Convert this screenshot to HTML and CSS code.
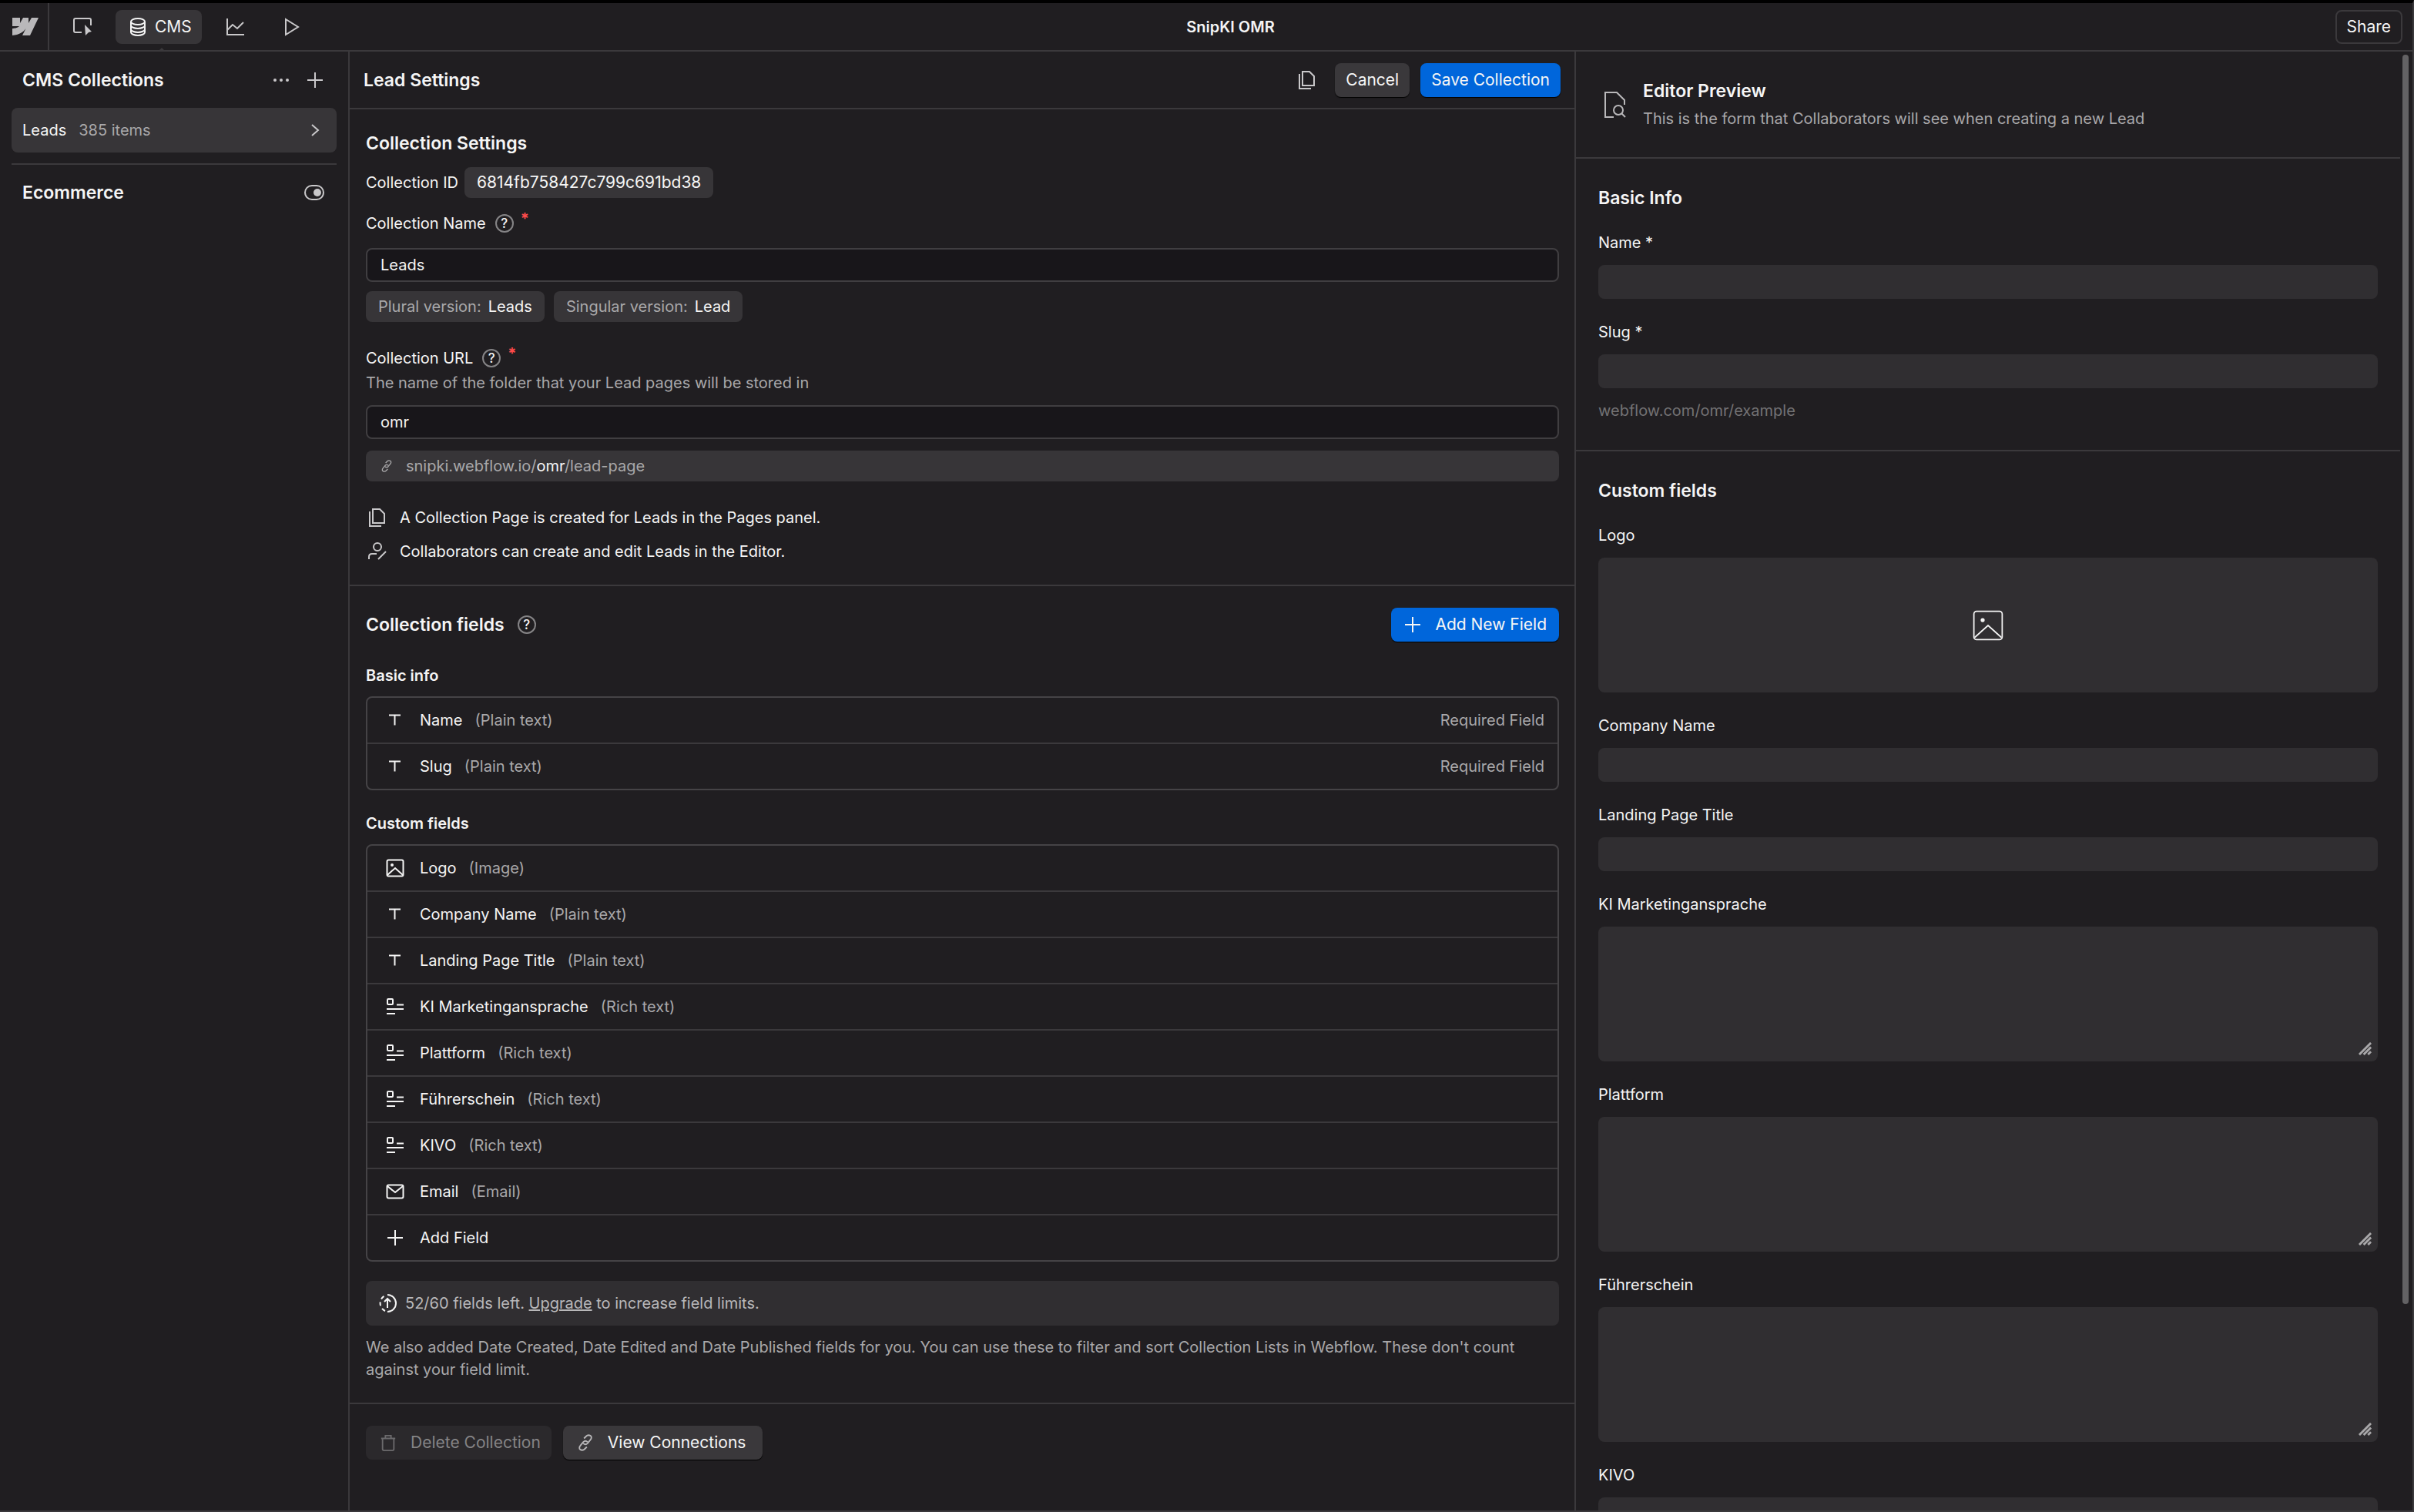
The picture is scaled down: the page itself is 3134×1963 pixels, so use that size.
FILE: index.html
```html
<!DOCTYPE html>
<html lang="en">
<head>
  <meta charset="UTF-8" />
  <meta name="viewport" content="width=device-width, initial-scale=1.0" />
  <title>SnipKI OMR</title>
  <link rel="stylesheet" href="styles.css">
</head>
<body>
  <!-- shared icons -->
  <svg class="sprite" aria-hidden="true">
    <symbol id="i-text" viewBox="0 0 24 24"><path d="M4 5.5h15M11.500 5.500v13" /></symbol>
    <symbol id="i-image" viewBox="0 0 24 24"><rect x="1.5" y="1.5" width="21" height="21" rx="2" /><circle cx="8" cy="8" r="1" fill="currentColor" /><path d="M2 21l10-9 10 9" /></symbol>
    <symbol id="i-rich" viewBox="0 0 24 24"><rect x="2" y="2" width="7" height="7" rx="1" /><path d="M14 9.5h9M1 15h22M1 21h11" /></symbol>
    <symbol id="i-mail" viewBox="0 0 24 24"><rect x="1.5" y="3.5" width="21" height="17" rx="2" /><path d="M2 5l10 8 10-8" /></symbol>
    <symbol id="i-plus" viewBox="0 0 24 24"><path d="M12 2v20M2 12h20" /></symbol>
    <symbol id="i-pages" viewBox="0 0 24 24"><path d="M6 1h9l6 6v12H6zM2 4v19h15" /></symbol>
    <symbol id="i-link" viewBox="0 0 24 24"><path d="M10 6l3-3c2-2 4-2 6-1s2 4 0 6l-4 5c-2 2-4 2-6 0M14 18l-3 3c-2 2-4 2-6 1s-2-4 0-6l4-5c2-2 4-2 6 0" /></symbol>
    <symbol id="i-grip" viewBox="0 0 18 18"><path d="M1 17L17 1M7 17L17 7M13 17l4-4" /></symbol>
  </svg>

  <header class="topbar">
    <a class="logo" href="#" aria-label="Webflow">
      <svg viewBox="0 0 34 23"><path fill="currentColor" d="M34 0L23 23H13l4.500-9C14 19 9 22 0 23v-9s6 0 9-3H0V0h10v7l4-7h7v7l4-7z" /></svg>
    </a>
    <div class="topbar-main">
      <nav class="tools">
        <button class="tool" aria-label="Designer"><svg class="icon" viewBox="0 0 24 24"><path d="M11 19H3a2 2 0 0 1-2-2V3a2 2 0 0 1 2-2h18a2 2 0 0 1 2 2v7" /><path fill="currentColor" stroke="none" d="M15 9l9 9-4 1-4 4z" /></svg></button>
        <button class="tool tool-active"><svg class="icon" viewBox="0 0 24 24"><ellipse cx="12" cy="5" rx="9" ry="4" /><path d="M3 5v14c0 2 4 4 9 4s9-2 9-4V5M3 10c0 2 4 4 9 4s9-2 9-4M3 15c0 2 4 4 9 4s9-2 9-4" /></svg>CMS</button>
        <button class="tool" aria-label="Insights"><svg class="icon" viewBox="0 0 24 24"><path d="M2 1v21h22M2 16l7-7 6 5 8-8" /></svg></button>
        <button class="tool" aria-label="Preview"><svg class="icon" viewBox="0 0 24 24"><path d="M4 2l16 10L4 22z" /></svg></button>
      </nav>
      <div class="site-name">SnipKI OMR</div>
      <button class="share">Share</button>
    </div>
  </header>

  <div class="workspace">
    <aside class="sidebar">
      <div class="side-head">
        <h2>CMS Collections</h2>
        <button class="icon-btn" aria-label="More"><svg class="icon" viewBox="0 0 24 24"><g fill="currentColor" stroke="none"><circle cx="4" cy="12" r="2" /><circle cx="12" cy="12" r="2" /><circle cx="20" cy="12" r="2" /></g></svg></button>
        <button class="icon-btn" aria-label="Add collection"><svg class="icon"><use href="#i-plus" /></svg></button>
      </div>
      <a class="collection" href="#">Leads <span class="muted">385 items</span><svg class="icon" viewBox="0 0 24 24"><path d="M8 5l8 7-8 7" /></svg></a>
      <div class="side-head side-shop">
        <h2>Ecommerce</h2>
        <button class="icon-btn" aria-label="Enable Ecommerce"><svg class="icon toggle" viewBox="0 0 26 20"><rect x="1" y="1" width="24" height="18" rx="9" /><circle cx="17" cy="10" r="5" fill="currentColor" stroke="none" /></svg></button>
      </div>
    </aside>

    <main class="settings">
      <div class="settings-head">
        <h2>Lead Settings</h2>
        <button class="icon-btn" aria-label="Duplicate"><svg class="icon"><use href="#i-pages" /></svg></button>
        <button class="btn">Cancel</button>
        <button class="btn btn-primary">Save Collection</button>
      </div>

      <section class="section general">
        <h2>Collection Settings</h2>
        <div class="id-row">Collection ID <span class="chip">6814fb758427c799c691bd38</span></div>
        <div class="label-row">
          <label for="name">Collection Name</label><span class="help">?</span><span class="star">*</span>
        </div>
        <input class="input name-input" id="name" type="text" value="Leads">
        <div class="chips">
          <span class="chip"><span class="muted">Plural version:</span> Leads</span>
          <span class="chip"><span class="muted">Singular version:</span> Lead</span>
        </div>
        <div class="label-row">
          <label for="url">Collection URL</label><span class="help">?</span><span class="star">*</span>
        </div>
        <p class="hint">The name of the folder that your Lead pages will be stored in</p>
        <input class="input" id="url" type="text" value="omr">
        <div class="url"><svg class="icon"><use href="#i-link" /></svg><span>snipki.webflow.io/<b>omr</b>/lead-page</span></div>
        <ul class="facts">
          <li><svg class="icon"><use href="#i-pages" /></svg>A Collection Page is created for Leads in the Pages panel.</li>
          <li><svg class="icon" viewBox="0 0 24 24"><circle cx="12" cy="6" r="5" /><path d="M1 22v-3c0-3 2-4 4-4h6M13 22l10-10" /></svg>Collaborators can create and edit Leads in the Editor.</li>
        </ul>
      </section>

      <section class="section">
        <div class="fields-head">
          <h2>Collection fields</h2><span class="help">?</span>
          <button class="btn btn-primary btn-add"><svg class="icon"><use href="#i-plus" /></svg>Add New Field</button>
        </div>
        <h3>Basic info</h3>
        <ul class="fields">
          <li><svg class="icon"><use href="#i-text" /></svg>Name <span class="muted">(Plain text)</span><span class="required">Required Field</span></li>
          <li><svg class="icon"><use href="#i-text" /></svg>Slug <span class="muted">(Plain text)</span><span class="required">Required Field</span></li>
        </ul>
        <h3>Custom fields</h3>
        <ul class="fields">
          <li><svg class="icon"><use href="#i-image" /></svg>Logo <span class="muted">(Image)</span></li>
          <li><svg class="icon"><use href="#i-text" /></svg>Company Name <span class="muted">(Plain text)</span></li>
          <li><svg class="icon"><use href="#i-text" /></svg>Landing Page Title <span class="muted">(Plain text)</span></li>
          <li><svg class="icon"><use href="#i-rich" /></svg>KI Marketingansprache <span class="muted">(Rich text)</span></li>
          <li><svg class="icon"><use href="#i-rich" /></svg>Plattform <span class="muted">(Rich text)</span></li>
          <li><svg class="icon"><use href="#i-rich" /></svg>Führerschein <span class="muted">(Rich text)</span></li>
          <li><svg class="icon"><use href="#i-rich" /></svg>KIVO <span class="muted">(Rich text)</span></li>
          <li><svg class="icon"><use href="#i-mail" /></svg>Email <span class="muted">(Email)</span></li>
          <li><button class="add-field"><svg class="icon"><use href="#i-plus" /></svg>Add Field</button></li>
        </ul>
        <div class="limit">
          <svg class="icon" viewBox="0 0 24 24"><path d="M12 1a11 11 0 0 1 0 22M12 18V7M8 10l4-4 4 4" /><path stroke-dasharray="5 4" d="M9 22A11 11 0 0 1 9 2" /></svg>
          <span>52/60 fields left. <a href="#">Upgrade</a> to increase field limits.</span>
        </div>
        <p class="note">We also added Date Created, Date Edited and Date Published fields for you. You can use these to filter and sort Collection Lists in Webflow. These don't count against your field limit.</p>
      </section>

      <section class="section actions">
        <button class="btn btn-icon" disabled><svg class="icon" viewBox="0 0 24 24"><path d="M2 6h20M8 6V2h8v4M4 6v15a2 2 0 0 0 2 2h12a2 2 0 0 0 2-2V6" /></svg>Delete Collection</button>
        <button class="btn btn-icon"><svg class="icon"><use href="#i-link" /></svg>View Connections</button>
      </section>
    </main>

    <aside class="preview">
      <div class="preview-body">
        <div class="preview-head">
          <svg class="icon" viewBox="0 0 28 34"><path d="M12 33H1V1h15l10 10v6" /><circle cx="18" cy="24" r="6" /><path d="M22 28l5 5" /></svg>
          <div>
            <h2>Editor Preview</h2>
            <p class="muted">This is the form that Collaborators will see when creating a new Lead</p>
          </div>
        </div>
        <section class="form form-basic">
          <h2>Basic Info</h2>
          <div class="field"><label for="p-name">Name *</label><input class="box" id="p-name" type="text"></div>
          <div class="field"><label for="p-slug">Slug *</label><input class="box" id="p-slug" type="text"></div>
          <p class="slug">webflow.com/omr/example</p>
        </section>
        <section class="form">
          <h2>Custom fields</h2>
          <div class="field"><label for="p-logo">Logo</label><button class="box area upload" id="p-logo"><svg class="icon"><use href="#i-image" /></svg></button></div>
          <div class="field"><label for="p-company">Company Name</label><input class="box" id="p-company" type="text"></div>
          <div class="field"><label for="p-title">Landing Page Title</label><input class="box" id="p-title" type="text"></div>
          <div class="field"><label for="p-ki">KI Marketingansprache</label><textarea class="box area" id="p-ki"></textarea><svg class="grip"><use href="#i-grip" /></svg></div>
          <div class="field"><label for="p-plattform">Plattform</label><textarea class="box area" id="p-plattform"></textarea><svg class="grip"><use href="#i-grip" /></svg></div>
          <div class="field"><label for="p-schein">Führerschein</label><textarea class="box area" id="p-schein"></textarea><svg class="grip"><use href="#i-grip" /></svg></div>
          <div class="field"><label for="p-kivo">KIVO</label><textarea class="box area" id="p-kivo"></textarea><svg class="grip"><use href="#i-grip" /></svg></div>
        </section>
      </div>
      <div class="scrollbar"><div class="thumb"></div></div>
    </aside>
  </div>
</body>
</html>
```
FILE: styles.css
```css
:root {
  --bg: #201e21;
  --line: #3b393c;
  --chip: #373538;
  --box: #302e31;
  --text: #f5f5f5;
  --muted: #a9a8aa;
  --blue: #0066db;
}
* { box-sizing: border-box; }
html, body {
  margin: 0;
  height: 100%;
  overflow: hidden;
}
body {
  display: flex;
  flex-direction: column;
  border: 2px solid var(--line);
  border-top: 4px solid #000;
  border-left: 0;
  background: var(--bg);
  color: var(--text);
  font-family: Inter, sans-serif;
  font-size: 20px;
  line-height: 30px;
}
h2, h3, p, ul {
  margin: 0;
  padding: 0;
}
h2 {
  font-size: 23px;
  font-weight: 600;
}
h3 {
  font-size: 20px;
  font-weight: 600;
}
ul { list-style: none; }
button, input, textarea {
  font: inherit;
  color: inherit;
  margin: 0;
}
button {
  padding: 0;
  border: 0;
  background: none;
}
.sprite {
  position: absolute;
  width: 0;
  height: 0;
}
.icon {
  flex: none;
  width: 24px;
  height: 24px;
  fill: none;
  stroke: currentColor;
  stroke-width: 2;
}
.muted { color: var(--muted); }

/* top bar */
.topbar {
  display: flex;
  flex: none;
  height: 63px;
  border-bottom: 2px solid var(--line);
  font-size: 21px;
}
.logo {
  display: flex;
  align-items: center;
  width: 64px;
  padding-left: 16px;
  border-right: 2px solid var(--line);
  color: #b9b8ba;
}
.logo svg {
  width: 34px;
  height: 23px;
}
.topbar-main {
  flex: 1;
  display: grid;
  grid-template-columns: 1fr auto 1fr;
  align-items: center;
  padding: 0 13px 0 12px;
}
.tools {
  display: flex;
  gap: 12px;
}
.tool {
  display: flex;
  align-items: center;
  gap: 10px;
  height: 44px;
  padding: 0 19px;
  border-radius: 8px;
  color: #c9c8ca;
}
.tool-active {
  position: relative;
  padding: 0 13px 0 17px;
  background: var(--chip);
  color: var(--text);
}
.tool-active::after {
  content: "";
  position: absolute;
  top: 49px;
  left: 50%;
  border: 4px solid transparent;
  border-top: 0;
  border-bottom-color: var(--line);
}
.site-name {
  font-size: 20px;
  font-weight: 600;
}
.share {
  justify-self: end;
  height: 44px;
  padding: 0 13px;
  border: 2px solid var(--line);
  border-radius: 8px;
}

.workspace {
  flex: 1;
  min-height: 0;
  display: grid;
  grid-template-columns: 454px minmax(0, 1fr) 1086px;
}

/* collections */
.sidebar {
  padding: 0 15px;
  border-right: 2px solid var(--line);
}
.side-head {
  display: flex;
  align-items: center;
  gap: 20px;
  height: 73px;
  padding: 0 16px 0 14px;
}
.side-head h2 { flex: 1; }
.icon-btn {
  display: flex;
  color: #c9c8ca;
}
.collection {
  display: flex;
  align-items: center;
  gap: 16px;
  height: 58px;
  padding: 0 16px 0 14px;
  border-radius: 8px;
  background: var(--chip);
  color: inherit;
  text-decoration: none;
}
.collection .icon {
  margin-left: auto;
  color: #c9c8ca;
}
.side-shop {
  margin-top: 14px;
  border-top: 2px solid var(--line);
}
.toggle {
  width: 26px;
  height: 20px;
}

/* buttons and chips */
.btn {
  display: flex;
  align-items: center;
  justify-content: center;
  height: 44px;
  padding: 0 14px;
  border-radius: 8px;
  background: #3a383b;
  box-shadow: 0 1px 1px #000;
  font-size: 21px;
}
.btn-primary { background: var(--blue); }
.btn-icon {
  gap: 18px;
  padding: 0 22px 0 18px;
}
.btn-icon .icon {
  width: 22px;
  height: 22px;
  color: #b9b8ba;
}
.btn:disabled {
  padding-right: 14px;
  background: #2b292c;
  box-shadow: none;
  color: #858486;
}
.btn:disabled .icon { color: #6b6a6c; }
.chip {
  display: flex;
  align-items: center;
  gap: 9px;
  height: 40px;
  padding: 0 16px;
  border-radius: 8px;
  background: var(--chip);
}

/* settings */
.settings { border-right: 2px solid var(--line); }
.settings-head {
  display: flex;
  align-items: center;
  gap: 14px;
  height: 75px;
  padding: 0 18px;
  border-bottom: 2px solid var(--line);
}
.settings-head h2 { flex: 1; }
.settings-head .icon-btn { margin-right: 10px; }
.section {
  padding: 28px 20px 28px 21px;
  border-bottom: 2px solid var(--line);
}
.general { padding-top: 29px; }
.id-row {
  display: flex;
  align-items: center;
  gap: 8px;
  margin: 16px 0;
}
.id-row .chip { font-size: 21px; }
.label-row {
  display: flex;
  align-items: center;
  height: 34px;
}
.help {
  display: flex;
  align-items: center;
  justify-content: center;
  width: 24px;
  height: 24px;
  margin-left: 12px;
  border: 2px solid #858486;
  border-radius: 50%;
  font-size: 17px;
  font-weight: 500;
}
.star {
  align-self: flex-start;
  margin-left: 9px;
  color: #ff4b4b;
  font-weight: 700;
  line-height: 22px;
}
.input {
  display: block;
  width: 100%;
  height: 44px;
  padding: 0 17px;
  border: 2px solid #403e41;
  border-radius: 8px;
  background: #18161a;
}
.name-input { margin-top: 15px; }
.chips {
  display: flex;
  gap: 12px;
  margin: 12px 0 30px;
}
.hint {
  margin-bottom: 14px;
  color: var(--muted);
}
.url {
  display: flex;
  align-items: center;
  gap: 17px;
  height: 40px;
  margin-top: 15px;
  padding: 0 19px;
  border-radius: 8px;
  background: var(--chip);
  color: var(--muted);
}
.url .icon {
  width: 16px;
  height: 16px;
}
.url b {
  color: var(--text);
  font-weight: 400;
}
.facts {
  display: grid;
  gap: 14px;
  margin-top: 32px;
}
.facts li {
  display: flex;
  align-items: center;
  gap: 17px;
  padding-left: 3px;
}
.facts .icon { color: #c9c8ca; }

/* field lists */
.fields-head {
  display: flex;
  align-items: center;
  margin-bottom: 29px;
}
.fields-head .help { margin-left: 17px; }
.btn-add {
  gap: 17px;
  margin-left: auto;
  padding: 0 16px;
}
.fields {
  margin: 12px 0 25px;
  border: 2px solid #454346;
  border-radius: 8px;
}
.fields + h3 { margin-top: 28px; }
.fields li {
  display: flex;
  align-items: center;
  height: 60px;
  padding: 0 17px 0 24px;
}
.fields li:first-child { height: 58px; }
.fields li + li { border-top: 2px solid var(--line); }
.fields .icon { margin-right: 20px; }
.fields .muted { margin-left: 16px; }
.add-field {
  display: flex;
  align-items: center;
}
.required {
  margin-left: auto;
  color: var(--muted);
}
.limit {
  display: flex;
  align-items: center;
  gap: 11px;
  height: 58px;
  margin-bottom: 14px;
  padding: 0 16px;
  border-radius: 8px;
  background: var(--box);
}
.limit span, .limit a { color: #b9b8ba; }
.note {
  line-height: 29px;
  color: var(--muted);
}
.actions {
  display: flex;
  gap: 15px;
  border-bottom: 0;
}

/* editor preview */
.preview {
  display: grid;
  grid-template-columns: minmax(0, 1fr) 16px;
  min-height: 0;
}
.preview-body {
  min-height: 0;
  overflow: hidden;
}
.preview-head {
  display: flex;
  align-items: center;
  gap: 22px;
  height: 139px;
  padding-left: 37px;
  border-bottom: 2px solid var(--line);
}
.preview-head .icon {
  width: 28px;
  height: 34px;
  color: #b9b8ba;
}
.preview-head p { margin-top: 6px; }
.form { padding: 36px 29px 0; }
.form-basic {
  padding-bottom: 36px;
  border-bottom: 2px solid var(--line);
}
.field {
  position: relative;
  margin-top: 28px;
}
.field label {
  display: block;
  margin-bottom: 14px;
}
.box {
  display: block;
  width: 100%;
  height: 44px;
  padding: 0 16px;
  border: 0;
  border-radius: 8px;
  background: var(--box);
  resize: none;
}
.area { height: 175px; }
.upload .icon {
  display: block;
  width: 42px;
  height: 42px;
  margin: auto;
  stroke-width: 1;
}
.grip {
  position: absolute;
  right: 8px;
  bottom: 8px;
  width: 17px;
  height: 17px;
  stroke: #a9a8aa;
  stroke-width: 3;
}
.slug {
  margin-top: 14px;
  color: #737274;
}
.scrollbar { padding: 4px 5px 4px 3px; }
.thumb {
  height: 86%;
  border-radius: 4px;
  background: #636264;
}
```
